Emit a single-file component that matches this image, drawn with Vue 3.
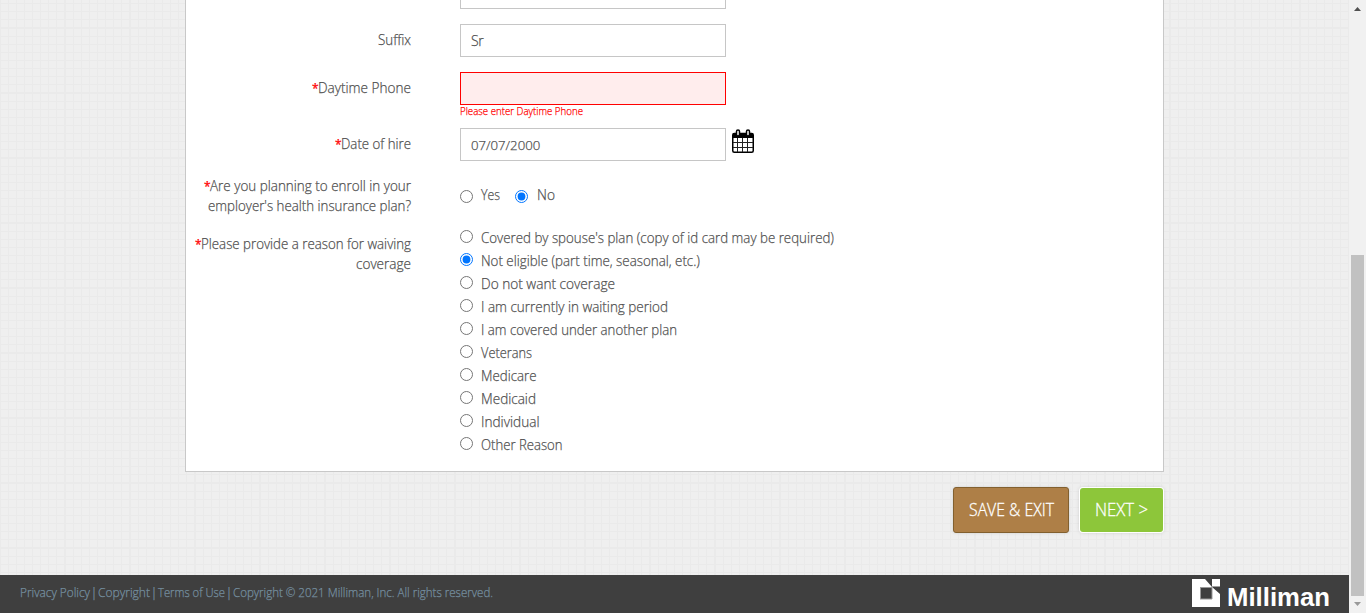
<script setup>
import { ref } from 'vue'

const enroll = ref('No')
const reason = ref(1)
const suffix = ref('Sr')
const phone = ref('')
const hireDate = ref('07/07/2000')

const reasons = [
  { text: "Covered by spouse's plan (copy of id card may be required)", width: 353 },
  { text: 'Not eligible (part time, seasonal, etc.)', width: 219 },
  { text: 'Do not want coverage', width: 134 },
  { text: 'I am currently in waiting period', width: 187 },
  { text: 'I am covered under another plan', width: 196 },
  { text: 'Veterans', width: 51 },
  { text: 'Medicare', width: 55.5 },
  { text: 'Medicaid', width: 55 },
  { text: 'Individual', width: 58.5 },
  { text: 'Other Reason', width: 81.5 },
]

const legal = [
  { text: 'Privacy Policy', width: 70 },
  { text: 'Copyright', width: 52 },
  { text: 'Terms of Use', width: 67 },
  { text: 'Copyright © 2021 Milliman, Inc. All rights reserved.', width: 260 },
]

// Condenses a line of text horizontally to the given width.
const vFit = {
  mounted(el, { value }) {
    const natural = el.getBoundingClientRect().width
    const scale = value / natural
    el.style.marginRight = `${value - natural}px`
    el.style.transform = `scaleX(${scale})`
  },
}
</script>

<template>
  <div class="page">
    <main class="content">
      <section class="panel">
        <div class="row cut"><span></span><div class="box stub"></div></div>
        <div class="row suffix">
          <div class="label"><div><span v-fit="33" class="fit">Suffix</span></div></div>
          <input v-model="suffix" class="box tall-text" type="text" />
        </div>
        <div class="row phone">
          <div class="label"><div><i>*</i><span v-fit="93" class="fit">Daytime Phone</span></div></div>
          <div class="stack">
            <input v-model="phone" class="box invalid" type="text" />
            <div class="error"><span v-fit="123" class="fit">Please enter Daytime Phone</span></div>
          </div>
        </div>
        <div class="row hire">
          <div class="label"><div><i>*</i><span v-fit="70" class="fit">Date of hire</span></div></div>
          <div class="date">
            <input v-model="hireDate" class="box" type="text" />
            <svg class="calendar" width="22" height="25" viewBox="0 0 22 25">
              <rect x="0.750" y="4.500" width="20.500" height="18.750" rx="1.500" fill="#fff" stroke="#000" stroke-width="1.500" />
              <path d="M1 4h20v5H1z" />
              <path d="M5.500 9v14M10.500 9v14M15.500 9v14M1 13.500h20M1 18.500h20" stroke="#222" fill="none" />
              <rect x="4.500" y="1" width="3" height="6" rx="1.500" fill="#fff" stroke="#000" stroke-width="1.500" />
              <rect x="14.500" y="1" width="3" height="6" rx="1.500" fill="#fff" stroke="#000" stroke-width="1.500" />
            </svg>
          </div>
        </div>
        <div class="row enroll">
          <div class="label">
            <div><i>*</i><span v-fit="201" class="fit">Are you planning to enroll in your</span></div>
            <div><span v-fit="203" class="fit">employer's health insurance plan?</span></div>
          </div>
          <div class="yesno">
            <label class="yes"><input v-model="enroll" type="radio" value="Yes" /><span v-fit="19" class="fit">Yes</span></label>
            <label class="no"><input v-model="enroll" type="radio" value="No" /><span v-fit="18" class="fit">No</span></label>
          </div>
        </div>
        <div class="row reasons">
          <div class="label">
            <div><i>*</i><span v-fit="210" class="fit">Please provide a reason for waiving</span></div>
            <div><span v-fit="55" class="fit">coverage</span></div>
          </div>
          <div class="options">
            <label v-for="(r, n) in reasons" :key="r.text" class="option">
              <input v-model="reason" type="radio" name="reason" :value="n" />
              <span v-fit="r.width" class="fit">{{ r.text }}</span>
            </label>
          </div>
        </div>
      </section>
      <div class="actions">
        <button class="save"><span v-fit="85" class="fit">SAVE &amp; EXIT</span></button>
        <button class="next"><span v-fit="53" class="fit">NEXT &gt;</span></button>
      </div>
      <footer class="footer">
        <div class="legal">
          <template v-for="(item, n) in legal" :key="n">
            <span v-if="n" class="bar">|</span>
            <span v-fit="item.width" class="fit">{{ item.text }}</span>
          </template>
        </div>
        <div class="brand">
          <svg width="28" height="28" viewBox="0 0 28 28">
            <path fill="#fff" d="M0 0h13l7 8H8v12h12V8l8 7v13H0z" />
            <path fill="#fff" d="M20 0h8v7.500h-8z" />
            <path d="M8 8.500h12M20 8v12M8.500 8v12M8 20h12" stroke="#999" fill="none" />
          </svg>
          <span v-fit="103" class="fit wordmark">Milliman</span>
        </div>
      </footer>
    </main>
    <div class="scrollbar">
      <svg width="17" height="17" viewBox="0 0 17 17"><path d="M5 11l3.500-4 3.500 4z" fill="#505050" /></svg>
      <div class="thumb"></div>
      <svg width="17" height="17" viewBox="0 0 17 17"><path d="M5 6l3.500 4L12 6z" fill="#999" /></svg>
    </div>
  </div>
</template>

<style>
body { overflow: hidden; }
</style>

<style scoped>
* { box-sizing: border-box; }
.page {
  display: flex;
  height: 613px;
  font: 300 15px/20px "Open Sans", "Noto Sans", sans-serif;
  color: #505050;
  -webkit-text-stroke: 0.25px;
}
.content {
  display: flex;
  flex-direction: column;
  width: 1349px;
  background-color: #efefef;
  background-image:
    linear-gradient(90deg, transparent 64px, #eaeaea 64px),
    linear-gradient(transparent 64px, #eaeaea 64px),
    repeating-linear-gradient(90deg, transparent 0 7px, #eaeaea 7px 8px),
    repeating-linear-gradient(transparent 0 7px, #eaeaea 7px 8px);
  background-size: 65px 65px;
  background-position: 1px -36px;
}
.panel {
  width: 979px;
  height: 472px;
  margin-left: 185px;
  background: #fff;
  border: 1px solid #c8c8c8;
  border-top: 0;
}
.row { display: grid; grid-template-columns: 225px 500px; column-gap: 49px; }
.cut { height: 24px; }
.suffix { height: 48px; }
.phone { height: 56px; }
.hire { height: 48px; }
.enroll { height: 58px; }
.date { display: flex; }
.label { padding-top: 5px; text-align: right; white-space: nowrap; }
.enroll .label { padding-top: 0; margin-top: -1px; }
.reasons .label { padding-top: 0; margin-top: -1px; }
.label > div { height: 20px; }
.label i { color: #f00; font-style: normal; font-weight: 400; font-size: 12px; display: inline-block; width: 5px; text-indent: -1px; }
.fit { display: inline-block; white-space: nowrap; transform-origin: left; }
.box {
  width: 266px;
  height: 33px;
  border: 1px solid #c6c6c6;
  border-radius: 0;
  background: #fff;
  padding: 0 10px;
  font: 300 13.200px/20px "Open Sans", "Noto Sans", sans-serif;
  color: #505050;
  outline: 0;
}
.tall-text { font-size: 14px; letter-spacing: -0.5px; }
.stub { height: 9px; border-top: 0; }
.invalid { background: #ffeded; border-color: #f00; display: block; }
.error { font-size: 11px; line-height: 14px; color: #f00; margin-top: -1px; }
.calendar { margin: 1px 0 0 6px; }
input[type="radio"] { width: 13px; height: 13px; margin: 0 8px 0 0; flex: none; }
.yesno { display: flex; padding-top: 8px; }
.yesno label { display: flex; height: 20px; }
.yesno input { margin-top: 6px; }
.yes { width: 55px; }
.no input { margin-right: 9px; }
.options { margin-top: -8px; }
.option { display: flex; height: 23px; }
.option input { margin-top: 4px; }
.option .fit { margin-top: 1px; }
.actions { display: flex; justify-content: flex-end; gap: 11px; height: 103px; padding: 15px 186px 0 0; }
button { height: 46px; padding: 0 0 2px; border-radius: 3px; color: #fff; font: 300 18px/24px "Open Sans", "Noto Sans", sans-serif; text-align: left; -webkit-text-stroke: 0.3px; }
.save { width: 116px; padding-left: 15px; background: #ae7f47; border: 1px solid #82602f; box-shadow: 0 0 3px #ccc; }
.next { width: 83px; height: 44px; margin-top: 1px; padding-left: 15px; background: #8dc63a; border: 0; box-shadow: 0 0 0 1px #fff, 0 0 4px #bbb; }
.footer { display: flex; justify-content: space-between; height: 38px; padding: 4px 19px 0 20px; background: #3f3f3f; color: #7690a0; font-size: 13px; }
.legal { display: flex; padding-top: 3px; }
.bar { width: 8px; text-align: center; }
.brand { display: flex; gap: 7px; width: 138px; }
.wordmark { font: 700 26px/28px "Liberation Sans", Arial, sans-serif; color: #fff; padding-top: 4px; -webkit-text-stroke: 0; }
.scrollbar { display: flex; flex-direction: column; width: 17px; background: #f1f1f1; }
.thumb { width: 13px; height: 341px; margin: 238px 2px 0; background: #c1c1c1; }
</style>
